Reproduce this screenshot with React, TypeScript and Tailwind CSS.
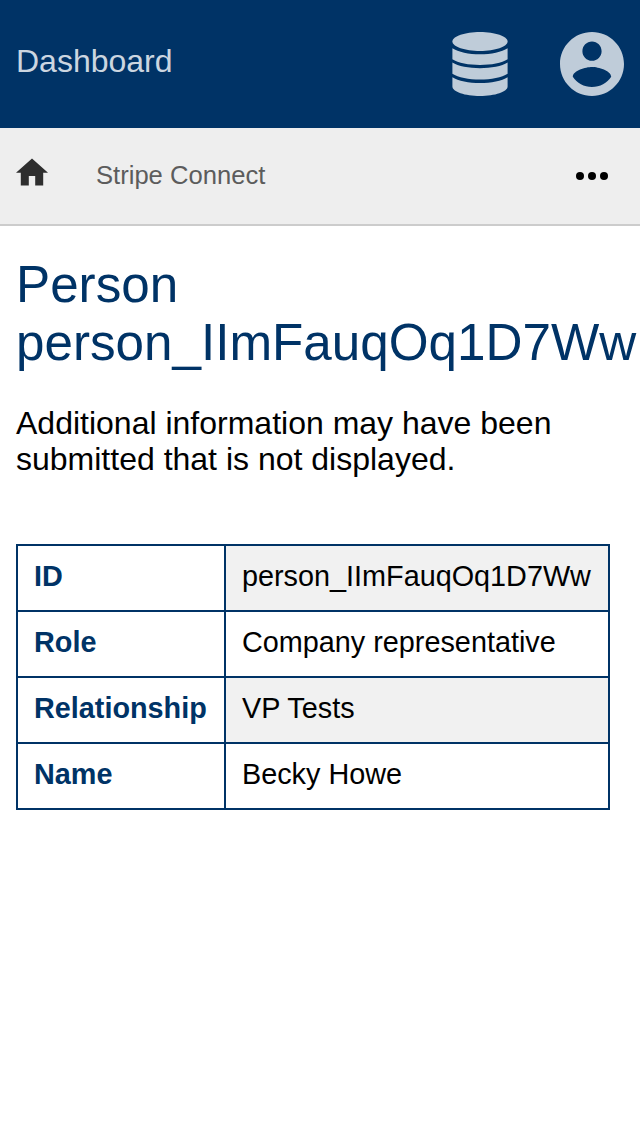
const rows = [
  { label: 'ID', value: 'person_IImFauqOq1D7Ww' },
  { label: 'Role', value: 'Company representative' },
  { label: 'Relationship', value: 'VP Tests' },
  { label: 'Name', value: 'Becky Howe' },
];

function DatabaseIcon() {
  return (
    <svg className="h-16 w-14" viewBox="0 0 56 64" fill="currentColor" aria-hidden="true">
      <path d="M28 0C13 0 .4 4.300 .4 9.500C.4 14.700 13 19 28 19S55.600 14.700 55.600 9.500C55.600 4.300 43 0 28 0Z" />
      <path d="M.4 16.200C6 20 17 22.300 28 22.300S50 20 55.600 16.200V27.300C50 31 39 33 28 33S6 31 .4 27.300Z" />
      <path d="M.4 30.600C6 34.200 17 36.300 28 36.300S50 34.200 55.600 30.600V41.700C50 45.400 39 47.600 28 47.600S6 45.400 .4 41.700Z" />
      <path d="M.4 45.200C6 48.800 17 51 28 51S50 48.800 55.600 45.200V54.500C55.600 59.800 43 64 28 64S.4 59.800 .4 54.500Z" />
    </svg>
  );
}

function AccountIcon() {
  return (
    <svg className="h-16 w-16" viewBox="2 2 20 20" fill="currentColor" aria-hidden="true">
      <path d="M12 2C6.48 2 2 6.48 2 12s4.48 10 10 10 10-4.48 10-10S17.52 2 12 2zm0 3c1.66 0 3 1.34 3 3s-1.34 3-3 3-3-1.34-3-3 1.34-3 3-3zm0 14.2c-2.5 0-4.71-1.28-6-3.22.03-1.99 4-3.08 6-3.08 1.99 0 5.97 1.09 6 3.08-1.29 1.94-3.5 3.22-6 3.22z" />
    </svg>
  );
}

export default function App() {
  return (
    <div className="min-h-[1136px] w-full overflow-hidden bg-white font-['Liberation_Sans',Arial,sans-serif] text-black">
      <header className="flex h-32 items-center bg-[#003366] px-4 text-[#bfccd9]">
        <a className="mb-1.5 grow text-[32px] text-[#ccd6e0]">Dashboard</a>
        <div className="flex gap-[52px]">
          <DatabaseIcon />
          <AccountIcon />
        </div>
      </header>
      <nav className="flex h-[98px] items-center border-b-2 border-[#cccccc] bg-[#eeeeee] px-4">
        <svg className="mb-2 h-7 w-8" viewBox="2 3 20 17" fill="#2e2e2e" aria-hidden="true">
          <path d="M10 20v-6h4v6h5v-8h3L12 3 2 12h3v8z" />
        </svg>
        <span className="mb-0.5 ml-12 grow text-[25.6px] text-[#5c5c5c]">Stripe Connect</span>
        <svg className="mr-4 h-2 w-8" viewBox="0 0 32 8" aria-hidden="true">
          <circle cx="4" cy="4" r="4" />
          <circle cx="16" cy="4" r="4" />
          <circle cx="28" cy="4" r="4" />
        </svg>
      </nav>
      <main className="px-4 pt-[30px]">
        <h1 className="text-[51.2px] leading-[58px] text-[#003366]">
          Person
          <br />
          person_IImFauqOq1D7Ww
        </h1>
        <p className="mt-[33px] text-[32px] leading-9">Additional information may have been submitted that is not displayed.</p>
        <table className="mt-[67px] border-collapse text-[28.8px] leading-8">
          <tbody>
            {rows.map((row) => (
              <tr key={row.label} className="h-[66px] odd:bg-[#f1f1f1]">
                <th className="w-[208px] border-2 border-[#003366] bg-white px-4 pb-1 text-left font-bold text-[#003366]">{row.label}</th>
                <td className="w-[384px] border-2 border-[#003366] px-4 pb-1">{row.value}</td>
              </tr>
            ))}
          </tbody>
        </table>
      </main>
    </div>
  );
}
